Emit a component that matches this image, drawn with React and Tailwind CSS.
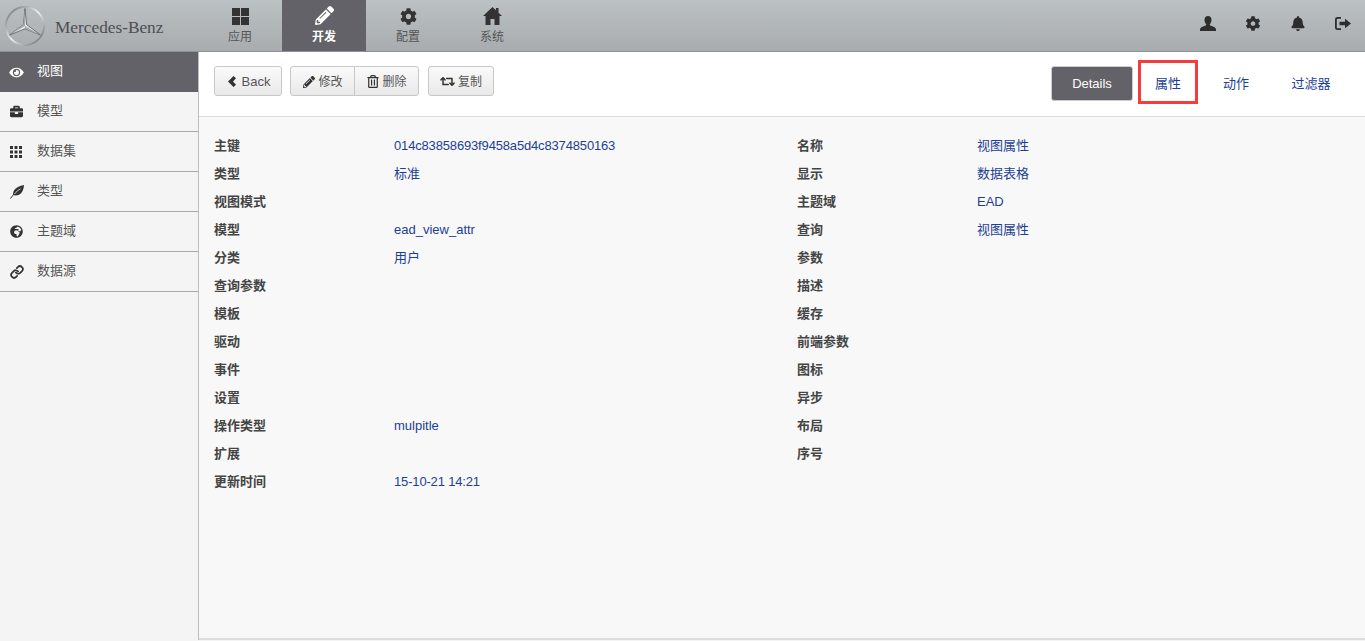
import React from 'react';
import { Link as LinkIcon } from 'lucide-react';
import { FaPencilAlt, FaCog, FaBell, FaEye, FaBriefcase, FaGlobeAfrica, FaRegTrashAlt, FaRetweet } from 'react-icons/fa';

const FONT = 'font-["Liberation_Sans","Noto_Sans_CJK_SC",sans-serif]';

const GridLarge = ({ className }) => (
    <svg viewBox="0 0 17 17" fill="currentColor" className={className}>
        <path d="M0 0h8v8H0zM9 0h8v8H9zM0 9h8v8H0zM9 9h8v8H9z" />
    </svg>
);

const GridSmall = ({ className }) => (
    <svg viewBox="0 0 12 12" fill="currentColor" className={className}>
        <path d="M0 0h3v3H0zM4.500 0h3v3h-3zM9 0h3v3H9zM0 4.500h3v3H0zM4.500 4.500h3v3h-3zM9 4.500h3v3H9zM0 9h3v3H0zM4.500 9h3v3h-3zM9 9h3v3H9z" />
    </svg>
);

const HomeIcon = ({ className }) => (
    <svg viewBox="0 0 19 18" fill="currentColor" className={className}>
        <path d="M9.500 0 L13 3.300 V1 H15.500 V5.700 L19 9 H16.500 V18 H11.500 V12 H7.500 V18 H2.500 V9 H0 Z" />
    </svg>
);

const UserIcon = ({ className }) => (
    <svg viewBox="0 0 16 15" fill="currentColor" className={className}>
        <path d="M8 0c2.200 0 3.500 1.700 3.500 3.900 0 1.700-.7 3.200-1.500 4.100-.4.500-.3 1.300.4 1.600 2.300.9 4.900 1.600 5.600 3.400V15H0v-2c.7-1.800 3.300-2.500 5.600-3.400.7-.3.800-1.100.4-1.600-.8-.9-1.500-2.400-1.500-4.100C4.500 1.700 5.800 0 8 0z" />
    </svg>
);

const LeafIcon = ({ className }) => (
    <svg viewBox="0 0 14 14" className={className}>
        <path d="M14 0 C13.500 6 11 10.500 5.500 10.500 C4.500 10.500 3.800 10.300 3.200 10 C2.500 6 5 2 14 0 Z" fill="currentColor" />
        <path d="M0.500 13.500 C3 10 6 6.500 10 4" fill="none" stroke="currentColor" strokeWidth="1" />
        <path d="M4.500 9 C6 7 8 5.200 10.500 3.800" fill="none" stroke="#f4f4f4" strokeWidth="0.8" />
    </svg>
);

const ChevronBold = ({ className }) => (
    <svg viewBox="0 0 9 11" fill="currentColor" className={className}>
        <path d="M5.500 0 L8 2.300 L5 5.500 L8 8.700 L5.500 11 L0 5.500 Z" />
    </svg>
);

const navItems = [
    { label: '应用', icon: GridLarge, size: 'h-[17px] w-[17px] mt-[1px]' },
    { label: '开发', icon: FaPencilAlt, size: 'h-[19px] w-[19px] -mt-[1px]', active: true },
    { label: '配置', icon: FaCog, size: 'h-[17px] w-[17px] mt-[1px]' },
    { label: '系统', icon: HomeIcon, size: 'h-[18px] w-[19px]' },
];

const sideItems = [
    { label: '视图', icon: FaEye, size: 'h-[13px] w-[15px] -ml-px', active: true },
    { label: '模型', icon: FaBriefcase, size: 'h-[13px] w-[13px]' },
    { label: '数据集', icon: GridSmall, size: 'h-[12px] w-[12px]' },
    { label: '类型', icon: LeafIcon, size: 'h-[14px] w-[14px]' },
    { label: '主题域', icon: FaGlobeAfrica, size: 'h-[13px] w-[13px]' },
    { label: '数据源', icon: LinkIcon, size: 'h-[14px] w-[14px] stroke-[3]' },
];

const leftRows = [
    ['主键', '014c83858693f9458a5d4c8374850163'],
    ['类型', '标准'],
    ['视图模式', ''],
    ['模型', 'ead_view_attr'],
    ['分类', '用户'],
    ['查询参数', ''],
    ['模板', ''],
    ['驱动', ''],
    ['事件', ''],
    ['设置', ''],
    ['操作类型', 'mulpitle'],
    ['扩展', ''],
    ['更新时间', '15-10-21 14:21'],
];

const rightRows = [
    ['名称', '视图属性'],
    ['显示', '数据表格'],
    ['主题域', 'EAD'],
    ['查询', '视图属性'],
    ['参数', ''],
    ['描述', ''],
    ['缓存', ''],
    ['前端参数', ''],
    ['图标', ''],
    ['异步', ''],
    ['布局', ''],
    ['序号', ''],
];

const Logo = () => (
    <svg width="40" height="40" viewBox="0 0 40 40" className="shrink-0">
        <defs>
            <linearGradient id="ring" x1="0" y1="0" x2="1" y2="1">
                <stop offset="0" stopColor="#5f6366" />
                <stop offset="0.5" stopColor="#f0f1f2" />
                <stop offset="1" stopColor="#5a5e61" />
            </linearGradient>
        </defs>
        <circle cx="20" cy="20" r="19" fill="none" stroke="url(#ring)" strokeWidth="1.800" />
        <path d="M20 2.500 L21.500 18.500 L35.500 29 L20 22.800 L4.500 29 L18.500 18.500 Z" fill="#e6e8e9" stroke="#55595c" strokeWidth="0.800" strokeLinejoin="round" />
        <path d="M20 2.500 L20 20 L4.500 29 L18.500 18.500 Z M20 20 L35.500 29 L20 22.800 Z" fill="#a5a9ac" />
    </svg>
);

const Btn = ({ children, className = '' }) => (
    <button className={`flex h-[30px] items-center justify-center gap-[3px] border border-[#c8c8c8] bg-gradient-to-b from-[#fafafa] to-[#e9e9e9] pt-[1px] text-[12px] text-[#555] ${className}`}>
        {children}
    </button>
);

const InfoColumn = ({ rows, className }) => (
    <div className={className}>
        {rows.map(([label, value]) => (
            <div key={label} className="flex h-7 items-center pt-[2px] text-[13px]">
                <span className="w-[180px] shrink-0 font-bold text-[#444]">{label}</span>
                <span className={`text-[#1c3f94] ${/^\d/.test(value) ? 'tracking-[-0.16px]' : ''}`}>{value}</span>
            </div>
        ))}
    </div>
);

const App = () => {
    return (
        <div className={`flex h-[641px] w-[1365px] flex-col overflow-hidden bg-white ${FONT}`}>
            <header className="flex h-[52px] shrink-0 border-b border-[#8f9295] bg-gradient-to-b from-[#bcc1c4] to-[#a8acaf]">
                <div className="flex w-[198px] shrink-0 items-center gap-[10px] pl-[5px]">
                    <Logo />
                    <span className="mt-[5px] font-['Liberation_Serif',serif] text-[17.300px] text-[#4c4f52]">Mercedes-Benz</span>
                </div>
                <nav className="flex">
                    {navItems.map(({ label, icon: Icon, size, active }) => (
                        <div
                            key={label}
                            className={`flex h-[51px] w-[84px] flex-col items-center pt-[7px] text-[12px] ${active ? 'bg-[#636268] font-bold text-white' : 'text-[#555]'}`}
                        >
                            <span className="flex h-[19px] items-start">
                                <Icon className={`${size} ${active ? 'text-white' : 'text-[#333]'}`} />
                            </span>
                            <span className="mt-[3px] leading-[16px]">{label}</span>
                        </div>
                    ))}
                </nav>
                <div className="ml-auto flex items-center gap-[29px] pb-[5px] pr-[14px] text-[#2d2d2d]">
                    <UserIcon className="h-[15px] w-[16px]" />
                    <FaCog className="h-[15px] w-[16px]" />
                    <FaBell className="h-[15px] w-[16px]" />
                    <svg width="16" height="13" viewBox="0 0 16 14" preserveAspectRatio="none" fill="currentColor">
                        <path d="M5 0H2.500A2.500 2.500 0 0 0 0 2.500v9A2.500 2.500 0 0 0 2.500 14H6v-1.800H2.800a1 1 0 0 1-1-1V2.800a1 1 0 0 1 1-1H6V0z" />
                        <path d="M10 2l6 5-6 5V9H4.500V5H10z" />
                    </svg>
                </div>
            </header>

            <div className="flex min-h-0 flex-1">
                <aside className="w-[199px] shrink-0 border-r border-[#bdbdbd] bg-[#f4f4f4]">
                    {sideItems.map(({ label, icon: Icon, size, active }) => (
                        <div
                            key={label}
                            className={`flex h-10 items-center pl-[10px] text-[13px] ${active ? 'bg-[#636268] text-white' : 'border-b border-[#aaa] text-[#555]'}`}
                        >
                            <span className="flex w-[27px] shrink-0">
                                <Icon className={`${size} ${active ? 'text-white' : 'text-[#333]'}`} />
                            </span>
                            <span className="-mt-[2px]">{label}</span>
                        </div>
                    ))}
                </aside>

                <main className="flex min-w-0 flex-1 flex-col">
                    <div className="flex h-[65px] shrink-0 items-start border-b border-[#ddd] bg-white pl-[15px] pt-[14px]">
                        <Btn className="w-[68px] rounded-[3px] pl-[2px] text-[13px]">
                            <ChevronBold className="h-[11px] w-[9px] text-[#333]" />
                            <span className="ml-[2px]">Back</span>
                        </Btn>
                        <div className="ml-[8px] flex">
                            <Btn className="w-[65px] rounded-l-[3px] pl-[1px]">
                                <FaPencilAlt className="h-[12px] w-[12px] text-[#333]" />
                                修改
                            </Btn>
                            <Btn className="-ml-px w-[65px] rounded-r-[3px] pl-[1px]">
                                <FaRegTrashAlt className="h-[13px] w-[12px] text-[#333]" />
                                删除
                            </Btn>
                        </div>
                        <Btn className="ml-[9px] w-[66px] rounded-[3px]">
                            <FaRetweet className="h-[15px] w-[15px] text-[#333]" />
                            复制
                        </Btn>
                        <div className="ml-auto flex items-start text-[13px] text-[#1c3f94]">
                            <div className="flex h-[35px] w-[82px] items-center justify-center rounded-[3px] border border-[#ccc] bg-[#636268] text-white">
                                Details
                            </div>
                            <div className="relative ml-[5px] flex h-[35px] w-[60px] items-center justify-center">
                                属性
                                <div className="absolute left-0 top-[-6px] h-[44px] w-[60px] border-[3px] border-[#f63b3b]" />
                            </div>
                            <div className="ml-[8px] flex h-[35px] w-[60px] items-center justify-center">动作</div>
                            <div className="ml-[8px] mr-[17px] flex h-[35px] w-[74px] items-center justify-center">过滤器</div>
                        </div>
                    </div>
                    <div className="flex flex-1 border-b-2 border-[#ddd] bg-[#f8f8f8] pl-[15px] pt-[14px]">
                        <InfoColumn rows={leftRows} className="w-[583px] shrink-0" />
                        <InfoColumn rows={rightRows} className="flex-1" />
                    </div>
                </main>
            </div>
            <div className="h-px shrink-0 bg-[#f4f4f4]" />
        </div>
    );
};

export default App;
